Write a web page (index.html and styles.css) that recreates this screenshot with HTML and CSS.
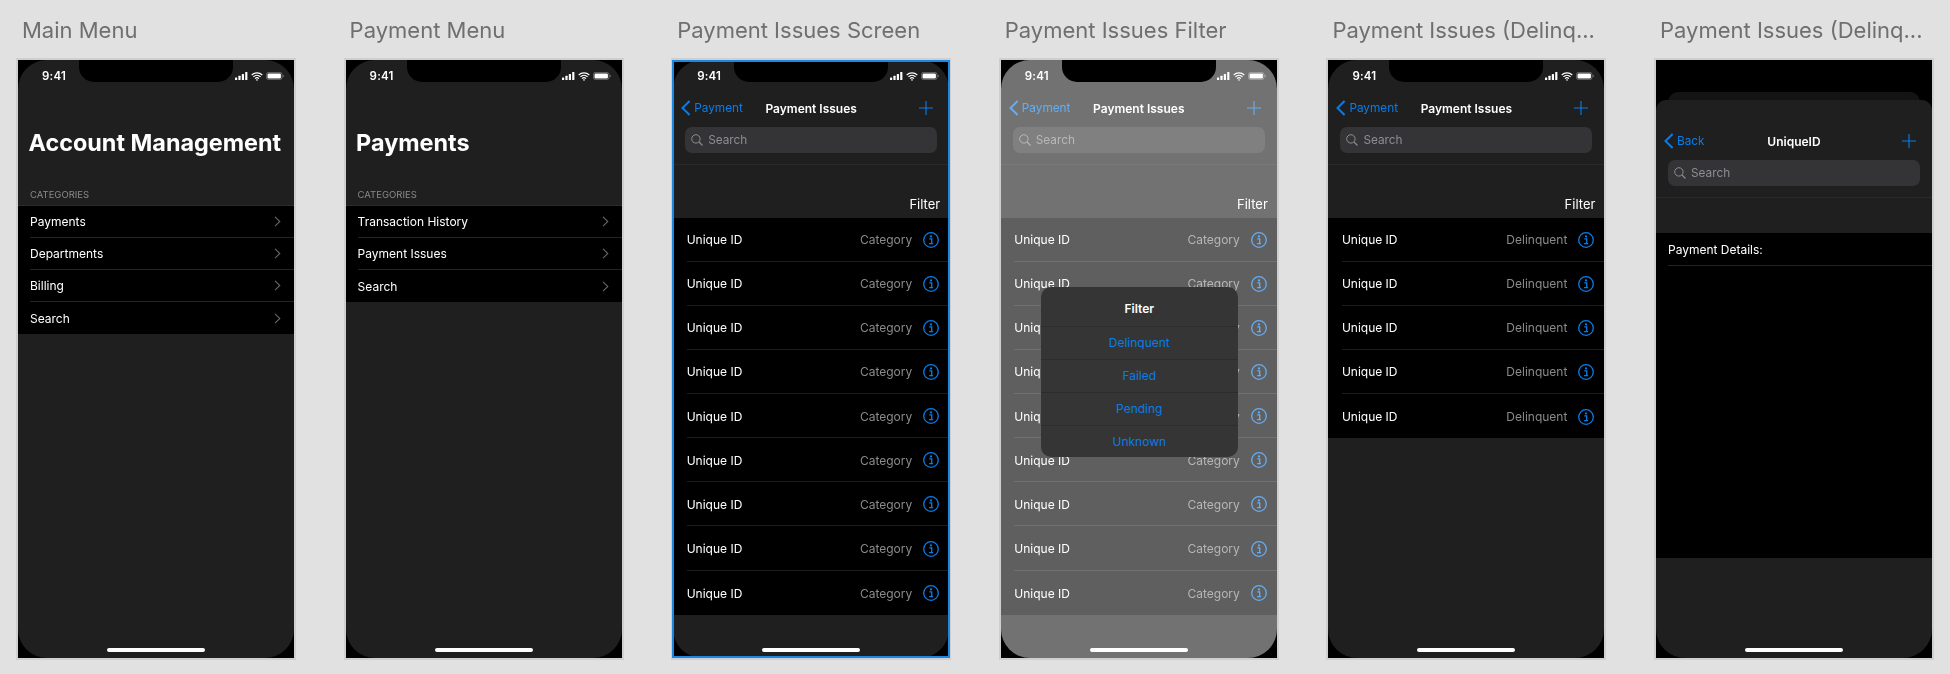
FILE: index.html
```html
<!DOCTYPE html>
<html lang="en">
<head>
<meta charset="utf-8">
<title>Account Management flows</title>
<link rel="stylesheet" href="styles.css">
</head>
<body>
<svg class="sprite" aria-hidden="true">
  <symbol id="i-signal" viewBox="0 0 13 8"><rect x="0" y="5.4" width="2.2" height="2.6" rx=".5"/><rect x="3.4" y="3.8" width="2.2" height="4.2" rx=".5"/><rect x="6.8" y="1.9" width="2.2" height="6.1" rx=".5"/><rect x="10.2" y="0" width="2.2" height="8" rx=".5"/></symbol>
  <symbol id="i-wifi" viewBox="0 0 12 9"><path d="M.7 3A7.6 7.6 0 0 1 11.3 3M2.4 4.9a5.2 5.2 0 0 1 7.2 0M4.1 6.6a2.8 2.8 0 0 1 3.8 0" fill="none" stroke="currentColor" stroke-width="1.2"/><path d="M6 9 4.9 7.8a1.6 1.6 0 0 1 2.2 0z"/></symbol>
  <symbol id="i-battery" viewBox="0 0 18 8"><rect x=".4" y=".4" width="15.6" height="7.2" rx="2.2" fill="none" stroke="currentColor" stroke-opacity=".4" stroke-width=".8"/><rect x="1.5" y="1.5" width="13.4" height="5" rx="1.2"/><path d="M16.8 2.7c.6.2 1 .7 1 1.3s-.4 1.100-1 1.300z" opacity=".45"/></symbol>
  <symbol id="i-back" viewBox="0 0 10 16"><path d="M8.600 1 1.500 8l7.100 7" fill="none" stroke="currentColor" stroke-width="2"/></symbol>
  <symbol id="i-plus" viewBox="0 0 14 14"><path d="M7 0v14M0 7h14" fill="none" stroke="currentColor" stroke-width="1.100"/></symbol>
  <symbol id="i-search" viewBox="0 0 12 12"><circle cx="4.900" cy="4.900" r="4.200" fill="none" stroke="currentColor" stroke-width="1"/><path d="m8 8 3.500 3.500" fill="none" stroke="currentColor" stroke-width="1.100"/></symbol>
  <symbol id="i-info" viewBox="0 0 16 16"><circle cx="8" cy="8" r="7.300" fill="none" stroke="currentColor" stroke-width="1.300"/><circle cx="8" cy="4.400" r="1.100"/><path d="M6.300 6.900h2.400v4.600M6.100 11.700h3.900" fill="none" stroke="currentColor" stroke-width="1.300"/></symbol>
  <symbol id="i-chev" viewBox="0 0 7 11"><path d="m1 .8 4.800 4.700L1 10.200" fill="none" stroke="currentColor" stroke-width="1.100"/></symbol>
</svg>

<main class="board">

  <section class="artboard">
    <h2 class="label">Main Menu</h2>
    <div class="phone">
      <div class="screen">
        <div class="status"><span class="clock">9:41</span><span class="glyphs"><svg class="sig"><use href="#i-signal"/></svg><svg class="wifi"><use href="#i-wifi"/></svg><svg class="bat"><use href="#i-battery"/></svg></span></div>
        <h1 class="large-title">Account Management</h1>
        <div class="section-head">CATEGORIES</div>
        <ul class="menu">
          <li class="menu-row"><span>Payments</span><svg class="chev"><use href="#i-chev"/></svg></li>
          <li class="menu-row"><span>Departments</span><svg class="chev"><use href="#i-chev"/></svg></li>
          <li class="menu-row"><span>Billing</span><svg class="chev"><use href="#i-chev"/></svg></li>
          <li class="menu-row"><span>Search</span><svg class="chev"><use href="#i-chev"/></svg></li>
        </ul>
      </div>
      <div class="notch"></div><div class="home"></div>
    </div>
  </section>

  <section class="artboard">
    <h2 class="label">Payment Menu</h2>
    <div class="phone">
      <div class="screen">
        <div class="status"><span class="clock">9:41</span><span class="glyphs"><svg class="sig"><use href="#i-signal"/></svg><svg class="wifi"><use href="#i-wifi"/></svg><svg class="bat"><use href="#i-battery"/></svg></span></div>
        <h1 class="large-title">Payments</h1>
        <div class="section-head">CATEGORIES</div>
        <ul class="menu">
          <li class="menu-row"><span>Transaction History</span><svg class="chev"><use href="#i-chev"/></svg></li>
          <li class="menu-row"><span>Payment Issues</span><svg class="chev"><use href="#i-chev"/></svg></li>
          <li class="menu-row"><span>Search</span><svg class="chev"><use href="#i-chev"/></svg></li>
        </ul>
      </div>
      <div class="notch"></div><div class="home"></div>
    </div>
  </section>

  <section class="artboard">
    <h2 class="label">Payment Issues Screen</h2>
    <div class="phone selected">
      <div class="screen">
        <div class="status"><span class="clock">9:41</span><span class="glyphs"><svg class="sig"><use href="#i-signal"/></svg><svg class="wifi"><use href="#i-wifi"/></svg><svg class="bat"><use href="#i-battery"/></svg></span></div>
        <div class="nav"><span class="nav-back"><svg class="back"><use href="#i-back"/></svg>Payment</span><span class="nav-title">Payment Issues</span><svg class="plus"><use href="#i-plus"/></svg></div>
        <div class="searchwrap"><div class="search"><svg class="mag"><use href="#i-search"/></svg>Search</div></div>
        <div class="filter-bar">Filter</div>
        <ul class="issues">
          <li class="issue"><span class="id">Unique ID</span><span class="cat">Category</span><svg class="info"><use href="#i-info"/></svg></li>
          <li class="issue"><span class="id">Unique ID</span><span class="cat">Category</span><svg class="info"><use href="#i-info"/></svg></li>
          <li class="issue"><span class="id">Unique ID</span><span class="cat">Category</span><svg class="info"><use href="#i-info"/></svg></li>
          <li class="issue"><span class="id">Unique ID</span><span class="cat">Category</span><svg class="info"><use href="#i-info"/></svg></li>
          <li class="issue"><span class="id">Unique ID</span><span class="cat">Category</span><svg class="info"><use href="#i-info"/></svg></li>
          <li class="issue"><span class="id">Unique ID</span><span class="cat">Category</span><svg class="info"><use href="#i-info"/></svg></li>
          <li class="issue"><span class="id">Unique ID</span><span class="cat">Category</span><svg class="info"><use href="#i-info"/></svg></li>
          <li class="issue"><span class="id">Unique ID</span><span class="cat">Category</span><svg class="info"><use href="#i-info"/></svg></li>
          <li class="issue"><span class="id">Unique ID</span><span class="cat">Category</span><svg class="info"><use href="#i-info"/></svg></li>
        </ul>
      </div>
      <div class="notch"></div><div class="home"></div>
    </div>
  </section>

  <section class="artboard">
    <h2 class="label">Payment Issues Filter</h2>
    <div class="phone">
      <div class="screen">
        <div class="status"><span class="clock">9:41</span><span class="glyphs"><svg class="sig"><use href="#i-signal"/></svg><svg class="wifi"><use href="#i-wifi"/></svg><svg class="bat"><use href="#i-battery"/></svg></span></div>
        <div class="nav"><span class="nav-back"><svg class="back"><use href="#i-back"/></svg>Payment</span><span class="nav-title">Payment Issues</span><svg class="plus"><use href="#i-plus"/></svg></div>
        <div class="searchwrap"><div class="search"><svg class="mag"><use href="#i-search"/></svg>Search</div></div>
        <div class="filter-bar">Filter</div>
        <ul class="issues">
          <li class="issue"><span class="id">Unique ID</span><span class="cat">Category</span><svg class="info"><use href="#i-info"/></svg></li>
          <li class="issue"><span class="id">Unique ID</span><span class="cat">Category</span><svg class="info"><use href="#i-info"/></svg></li>
          <li class="issue"><span class="id">Unique ID</span><span class="cat">Category</span><svg class="info"><use href="#i-info"/></svg></li>
          <li class="issue"><span class="id">Unique ID</span><span class="cat">Category</span><svg class="info"><use href="#i-info"/></svg></li>
          <li class="issue"><span class="id">Unique ID</span><span class="cat">Category</span><svg class="info"><use href="#i-info"/></svg></li>
          <li class="issue"><span class="id">Unique ID</span><span class="cat">Category</span><svg class="info"><use href="#i-info"/></svg></li>
          <li class="issue"><span class="id">Unique ID</span><span class="cat">Category</span><svg class="info"><use href="#i-info"/></svg></li>
          <li class="issue"><span class="id">Unique ID</span><span class="cat">Category</span><svg class="info"><use href="#i-info"/></svg></li>
          <li class="issue"><span class="id">Unique ID</span><span class="cat">Category</span><svg class="info"><use href="#i-info"/></svg></li>
        </ul>
        <div class="dim"></div>
      </div>
      <div class="notch"></div><div class="home"></div>
      <div class="alert">
        <div class="alert-title">Filter</div>
        <div class="alert-opt">Delinquent</div>
        <div class="alert-opt">Failed</div>
        <div class="alert-opt">Pending</div>
        <div class="alert-opt">Unknown</div>
      </div>
    </div>
  </section>

  <section class="artboard">
    <h2 class="label">Payment Issues (Delinq...</h2>
    <div class="phone">
      <div class="screen">
        <div class="status"><span class="clock">9:41</span><span class="glyphs"><svg class="sig"><use href="#i-signal"/></svg><svg class="wifi"><use href="#i-wifi"/></svg><svg class="bat"><use href="#i-battery"/></svg></span></div>
        <div class="nav"><span class="nav-back"><svg class="back"><use href="#i-back"/></svg>Payment</span><span class="nav-title">Payment Issues</span><svg class="plus"><use href="#i-plus"/></svg></div>
        <div class="searchwrap"><div class="search"><svg class="mag"><use href="#i-search"/></svg>Search</div></div>
        <div class="filter-bar">Filter</div>
        <ul class="issues">
          <li class="issue"><span class="id">Unique ID</span><span class="cat">Delinquent</span><svg class="info"><use href="#i-info"/></svg></li>
          <li class="issue"><span class="id">Unique ID</span><span class="cat">Delinquent</span><svg class="info"><use href="#i-info"/></svg></li>
          <li class="issue"><span class="id">Unique ID</span><span class="cat">Delinquent</span><svg class="info"><use href="#i-info"/></svg></li>
          <li class="issue"><span class="id">Unique ID</span><span class="cat">Delinquent</span><svg class="info"><use href="#i-info"/></svg></li>
          <li class="issue"><span class="id">Unique ID</span><span class="cat">Delinquent</span><svg class="info"><use href="#i-info"/></svg></li>
        </ul>
      </div>
      <div class="notch"></div><div class="home"></div>
    </div>
  </section>

  <section class="artboard">
    <h2 class="label">Payment Issues (Delinq...</h2>
    <div class="phone">
      <div class="sheet-back"></div>
      <div class="screen sheet">
        <div class="nav"><span class="nav-back"><svg class="back"><use href="#i-back"/></svg>Back</span><span class="nav-title">UniqueID</span><svg class="plus"><use href="#i-plus"/></svg></div>
        <div class="searchwrap"><div class="search"><svg class="mag"><use href="#i-search"/></svg>Search</div></div>
        <div class="details">
          <div class="detail-row">Payment Details:</div>
        </div>
      </div>
      <div class="home"></div>
    </div>
  </section>

</main>
</body>
</html>
```

FILE: styles.css
```css
* { box-sizing: border-box; }
html, body { margin: 0; padding: 0; }
body {
  width: 1950px;
  height: 674px;
  overflow: hidden;
  background: #e1e1e1;
  font-family: Inter, "Noto Sans", "Liberation Sans", sans-serif;
  color: #fff;
}
.sprite { display: none; }
.board {
  display: flex;
  gap: 47.6px;
  padding-left: 16px;
}
.artboard { width: 280px; flex: none; }
.label {
  margin: 0;
  height: 58px;
  padding: 17px 0 0 6px;
  font-size: 22px;
  line-height: 26px;
  font-weight: 400;
  color: #6f6f6f;
  white-space: nowrap;
}
.phone {
  position: relative;
  width: 280px;
  height: 602px;
  border: 2px solid #cfcfcf;
  background: #000;
}
.phone.selected::after {
  content: "";
  position: absolute;
  top: 0;
  bottom: 0;
  left: -1.6px;
  right: -.4px;
  border: 2px solid #1a87e2;
}
.screen {
  position: relative;
  height: 100%;
  display: flex;
  flex-direction: column;
  background: #1f1f1f;
  border-radius: 29px;
  overflow: hidden;
}
.notch {
  position: absolute;
  left: 61px;
  top: 0;
  width: 154px;
  height: 22px;
  background: #000;
  border-radius: 0 0 15px 15px;
}
.home {
  position: absolute;
  left: 89px;
  bottom: 6px;
  width: 98px;
  height: 4px;
  border-radius: 2px;
  background: #fff;
}
.status {
  flex: none;
  height: 32px;
  display: flex;
  align-items: center;
  justify-content: space-between;
  padding: 0 10.5px 0 24px;
}
.clock { font-size: 11.5px; font-weight: 600; letter-spacing: .2px; }
.glyphs { display: flex; align-items: center; gap: 3px; color: #fff; fill: #fff; }
.sig { width: 13px; height: 8px; }
.wifi { width: 12px; height: 9px; }
.bat { width: 18px; height: 8px; }

.large-title {
  margin: 36px 0 0;
  padding-left: 10.5px;
  font-size: 23.4px;
  line-height: 30px;
  font-weight: 700;
  white-space: nowrap;
}
.section-head {
  margin-top: 30.5px;
  padding: 0 0 4px 12px;
  font-size: 9.5px;
  line-height: 12px;
  color: #8a8a8a;
}
.menu {
  list-style: none;
  margin: 0;
  padding: 0;
  background: #000;
  border-top: 1px solid #2b2b2b;
}
.menu-row {
  display: flex;
  align-items: center;
  justify-content: space-between;
  height: 32.2px;
  margin-left: 12px;
  padding-top: 1px;
  padding-right: 13px;
  font-size: 12px;
  border-bottom: 1px solid #232323;
}
.menu-row:last-child { border-bottom: 0; }
.chev { width: 7px; height: 11px; color: #666; }

.nav {
  flex: none;
  height: 32px;
  position: relative;
  display: flex;
  align-items: center;
  justify-content: space-between;
  padding: 0 16px 0 8px;
  font-size: 11.8px;
}
.nav-back { display: flex; align-items: center; gap: 3px; color: #0a7ce8; }
.back { width: 10px; height: 16px; }
.nav-title {
  position: absolute;
  left: 0;
  right: 0;
  text-align: center;
  font-size: 12px;
  font-weight: 600;
  pointer-events: none;
}
.plus { width: 14px; height: 14px; color: #0a7ce8; }
.searchwrap {
  flex: none;
  padding: 3px 12px 11px;
  border-bottom: 1px solid #2a2a2a;
}
.search {
  height: 26px;
  display: flex;
  align-items: center;
  gap: 5px;
  padding-left: 6px;
  border-radius: 7px;
  background: #343436;
  color: #8e8e93;
  font-size: 11.8px;
}
.mag { width: 12px; height: 12px; }
.filter-bar {
  flex: none;
  height: 52.5px;
  padding: 30px 9px 0 0;
  line-height: 18px;
  font-size: 13px;
  text-align: right;
}
.issues { list-style: none; margin: 0; padding: 0; background: #000; }
.issue {
  display: flex;
  align-items: center;
  height: 44.15px;
  margin-left: 13.5px;
  padding-right: 10px;
  padding-top: 1px;
  font-size: 12px;
  border-bottom: 1px solid #1c1c1e;
}
.issue:last-child { border-bottom: 0; }
.id { flex: 1; }
.cat { color: #8a8a8e; font-size: 12px; }
.info { width: 16px; height: 16px; margin-left: 11px; color: #0a7ce8; fill: #0a7ce8; }

.dim {
  position: absolute;
  inset: 0;
  background: #5f5f5f;
  mix-blend-mode: screen;
}
.alert {
  position: absolute;
  left: 40px;
  top: 227.3px;
  width: 197px;
  height: 169.5px;
  display: flex;
  flex-direction: column;
  background: #353535;
  border-radius: 10px;
  font-size: 12px;
  text-align: center;
}
.alert-title {
  height: 38.7px;
  line-height: 43px;
  font-size: 12px;
  font-weight: 600;
}
.alert-opt {
  height: 33px;
  line-height: 32px;
  color: #0a7ce8;
  border-top: 1px solid #2d2d2d;
}
.alert-opt:last-child { height: 32px; }

.sheet-back {
  position: absolute;
  left: 12px;
  top: 32px;
  width: 252px;
  height: 40px;
  background: #141414;
  border-radius: 10px 10px 0 0;
}
.screen.sheet {
  margin-top: 40px;
  height: 558px;
  border-radius: 10px 10px 29px 29px;
  padding-top: 25px;
}
.details {
  margin-top: 35px;
  height: 325px;
  background: #000;
}
.detail-row {
  height: 32.5px;
  margin-left: 12px;
  line-height: 34px;
  font-size: 12px;
  border-bottom: 1px solid #222;
}
```
